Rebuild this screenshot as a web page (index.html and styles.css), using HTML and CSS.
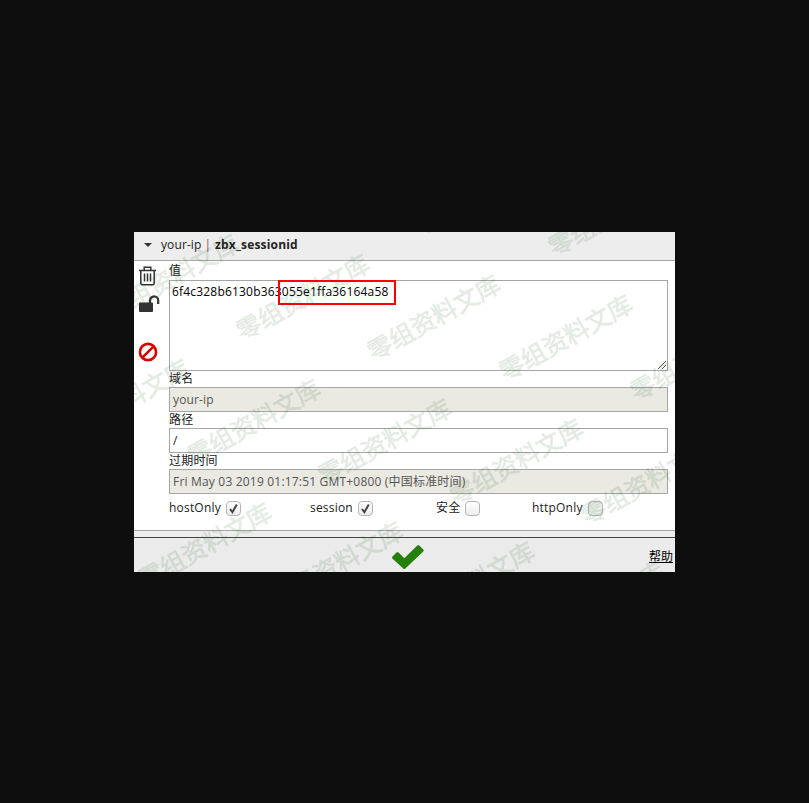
FILE: index.html
```
<!DOCTYPE html>
<html lang="zh-CN">
<head>
<meta charset="utf-8">
<title>Cookie</title>
<link rel="stylesheet" href="styles.css">
</head>
<body>
<main class="panel">
  <header class="head"><span class="arrow"></span><span class="host">your-ip</span><span class="bar">|</span><b class="name">zbx_sessionid</b></header>
  <section class="body">
    <nav class="tools">
      <svg class="trash" width="18" height="20" viewBox="0 0 18 20" fill="none" stroke="#333" stroke-width="1.5"><path d="M0 4.5h17M5.2 4V1.2h6.6V4M1.8 5v12.3q0 1.5 1.5 1.5h10.4q1.5 0 1.5-1.5V5M5.5 7.5v8M8.5 7.5v8M11.5 7.5v8"/></svg>
      <svg class="lock" width="22" height="18" viewBox="0 0 22 18"><rect x="0" y="7.5" width="14" height="9.5" rx="1" fill="#333"/><path d="M11 9V5.5a4.1 4.1 0 0 1 8.2 0V9" fill="none" stroke="#333" stroke-width="2.2"/></svg>
      <svg class="ban" width="20" height="20" viewBox="0 0 20 20" fill="none" stroke="#d90000" stroke-width="2.6"><circle cx="10" cy="10" r="8.1"/><path d="M4.3 15.7 15.7 4.3"/></svg>
    </nav>
    <div class="fields">
      <div class="label first">值</div>
      <div class="area"><span class="value">6f4c328b6130b363055e1ffa36164a58</span><span class="mark"></span>
        <svg class="grip" width="10" height="10" viewBox="0 0 10 10" stroke="#555" stroke-width="1"><path d="M1 9 9 1M5 9l4-4"/></svg>
      </div>
      <div class="label">域名</div>
      <div class="input off">your-ip</div>
      <div class="label">路径</div>
      <div class="input">/</div>
      <div class="label">过期时间</div>
      <div class="input off date">Fri May 03 2019 01:17:51 GMT+0800 (中国标准时间)</div>
      <div class="checks">
        <div class="check"><span>hostOnly</span><i class="box"><svg width="13" height="13" viewBox="0 0 13 13"><path d="M3 7 5.4 10.2 9.8 2.5" fill="none" stroke="#444" stroke-width="2"/></svg></i></div>
        <div class="check"><span>session</span><i class="box"><svg width="13" height="13" viewBox="0 0 13 13"><path d="M3 7 5.4 10.2 9.8 2.5" fill="none" stroke="#444" stroke-width="2"/></svg></i></div>
        <div class="check"><span>安全</span><i class="box"></i></div>
        <div class="check"><span>httpOnly</span><i class="box dim"></i></div>
      </div>
    </div>
  </section>
  <div class="strip"></div>
  <footer class="foot">
    <svg class="ok" width="34" height="26" viewBox="0 0 34 26"><path d="M1.3 12.7 5.5 8.5q1-1 2 0l5.8 5.8L26.3 1.5q1-1 2 0l4 4q1 1 0 2L14.3 24.5q-1 1-2 0L1.3 14.5q-.8-.9 0-1.8z" fill="#24800a"/></svg>
    <a class="help">帮助</a>
  </footer>
  <svg class="water" width="541" height="340" viewBox="134 232 541 340">
    <g>
      <text transform="translate(482 191.5) rotate(-29)">零组资料文库</text>
      <text transform="translate(614 211.5) rotate(-29)">零组资料文库</text>
      <text transform="translate(171 275.5) rotate(-29)">零组资料文库</text>
      <text transform="translate(302 295.5) rotate(-29)">零组资料文库</text>
      <text transform="translate(433 316) rotate(-29)">零组资料文库</text>
      <text transform="translate(565 336) rotate(-29)">零组资料文库</text>
      <text transform="translate(696 356) rotate(-29)">零组资料文库</text>
      <text transform="translate(122 400.5) rotate(-29)">零组资料文库</text>
      <text transform="translate(253 420.5) rotate(-29)">零组资料文库</text>
      <text transform="translate(384 440) rotate(-29)">零组资料文库</text>
      <text transform="translate(515.5 460) rotate(-29)">零组资料文库</text>
      <text transform="translate(647 480) rotate(-29)">零组资料文库</text>
      <text transform="translate(204 544) rotate(-29)">零组资料文库</text>
      <text transform="translate(335.5 563) rotate(-29)">零组资料文库</text>
      <text transform="translate(467 583) rotate(-29)">零组资料文库</text>
      <text transform="translate(598 603) rotate(-29)">零组资料文库</text>
    </g>
  </svg>
</main>
</body>
</html>
```
FILE: styles.css
```
* { box-sizing: border-box; }
body {
  margin: 0;
  height: 803px;
  background: #0e0e0e;
  display: flex;
  justify-content: center;
  align-items: flex-start;
  padding-top: 232px;
  font: 12px/16px "Open Sans", "Noto Sans CJK SC", sans-serif;
  color: #222;
}
.panel {
  position: relative;
  width: 541px;
  height: 340px;
  background: #fff;
  overflow: hidden;
}
.head {
  display: flex;
  align-items: center;
  height: 29px;
  padding: 0 0 2px 10px;
  background: #ededed;
  border-bottom: 1px solid #a5a5a5;
}
.arrow {
  border: 4px solid transparent;
  border-top: 4px solid #333;
  border-bottom: 0;
  margin-right: 9px;
}
.host { letter-spacing: .1px; }
.bar { color: #a0485c; margin: 0 4px 0 3px; }
.name { letter-spacing: .17px; }
.body { display: flex; height: 269px; }
.tools { width: 35px; padding: 5px 0 0 5px; }
.tools svg { display: block; }
.lock { margin-top: 9px; }
.ban { margin-top: 29px; margin-left: -1px; }
.fields { width: 499px; }
.label { height: 16px; line-height: 15px; white-space: nowrap; letter-spacing: .2px; }
.label.first { height: 19px; line-height: 20px; }
.area {
  position: relative;
  height: 91px;
  border: 1px solid #a5a5a5;
  padding: 3px 2px;
  color: #000;
}
.value { letter-spacing: .19px; }
.mark {
  position: absolute;
  left: 108px;
  top: -1px;
  width: 118px;
  height: 25px;
  border: 2px solid #f00;
}
.grip { position: absolute; right: 0; bottom: 0; }
.input {
  height: 25px;
  border: 1px solid #a5a5a5;
  padding: 0 3px;
  line-height: 23px;
  white-space: nowrap;
  letter-spacing: .15px;
}
.off { background: #eae9e2; color: #555; }
.date { letter-spacing: .19px; }
.checks {
  display: grid;
  grid-template-columns: 141px 126px 96px 1fr;
  height: 28px;
}
.check { display: flex; align-items: center; gap: 5px; white-space: nowrap; letter-spacing: .2px; }
.box {
  display: block;
  width: 15px;
  height: 15px;
  border: 1px solid #b5b5b5;
  border-radius: 4px;
  background: linear-gradient(#fff, #ededed);
}
.box svg { display: block; }
.dim { background: #eff1ef; }
.strip { height: 8px; background: #ededed; border-top: 1px solid #a5a5a5; border-bottom: 1px solid #444; }
.foot {
  display: flex;
  justify-content: space-between;
  height: 34px;
  padding: 5px 2px 0 257px;
  background: #ebebeb;
}
.ok { margin-top: 1px; }
.help { color: #000; text-decoration: underline; line-height: 27px; }
.water { position: absolute; left: 0; top: 0; pointer-events: none; }
.water g { opacity: .125; }
.water text {
  font: 24.6px "Noto Sans CJK SC", sans-serif;
  text-anchor: middle;
  dominant-baseline: central;
  fill: #1e5a1e;
  stroke: #1e5a1e;
  stroke-width: .7px;
}
```
